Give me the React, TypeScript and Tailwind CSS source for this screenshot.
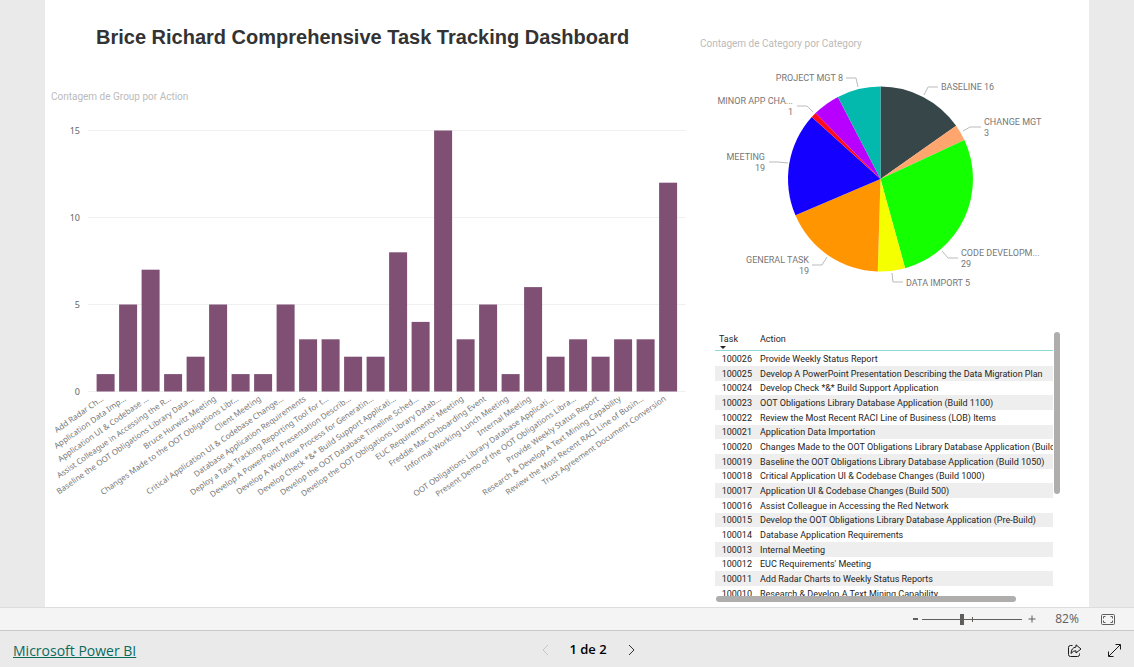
import { useState } from "react";

const UI_FONT = "font-['Segoe_UI','Open_Sans',sans-serif]";

const actions = [
  { label: "Add Radar Ch...", count: 1 },
  { label: "Application Data Imp...", count: 5 },
  { label: "Application UI & Codebase ...", count: 7 },
  { label: "Assist Colleague in Accessing the R...", count: 1 },
  { label: "Baseline the OOT Obligations Library Data...", count: 2 },
  { label: "Bruce Hurwitz Meeting", count: 5 },
  { label: "Changes Made to the OOT Obligations Libr...", count: 1 },
  { label: "Client Meeting", count: 1 },
  { label: "Critical Application UI & Codebase Change...", count: 5 },
  { label: "Database Application Requirements", count: 3 },
  { label: "Deploy a Task Tracking Reporting Tool for t...", count: 3 },
  { label: "Develop A PowerPoint Presentation Describ...", count: 2 },
  { label: "Develop A Workflow Process for Generatin...", count: 2 },
  { label: "Develop Check *&* Build Support Applicati...", count: 8 },
  { label: "Develop the OOT Database Timeline Sched...", count: 4 },
  { label: "Develop the OOT Obligations Library Datab...", count: 15 },
  { label: "EUC Requirements' Meeting", count: 3 },
  { label: "Freddie Mac Onboarding Event", count: 5 },
  { label: "Informal Working Lunch Meeting", count: 1 },
  { label: "Internal Meeting", count: 6 },
  { label: "OOT Obligations Library Database Applicati...", count: 2 },
  { label: "Present Demo of the OOT Obligations Libra...", count: 3 },
  { label: "Provide Weekly Status Report", count: 2 },
  { label: "Research & Develop A Text Mining Capability", count: 3 },
  { label: "Review the Most Recent RACI Line of Busin...", count: 3 },
  { label: "Trust Agreement Document Conversion", count: 12 },
];

const categories = [
  { name: "BASELINE", count: 16, color: "#374649" },
  { name: "CHANGE MGT", count: 3, color: "#fea66e" },
  { name: "CODE DEVELOPMENT", count: 29, color: "#14ff00" },
  { name: "DATA IMPORT", count: 5, color: "#f5ff00" },
  { name: "GENERAL TASK", count: 19, color: "#ff9500" },
  { name: "MEETING", count: 19, color: "#1400ff" },
  { name: "MINOR APP CHANGE", count: 1, color: "#ff0d1f" },
  { name: "OTHER", count: 5, color: "#b700ff" },
  { name: "PROJECT MGT", count: 8, color: "#03b8ac" },
];

const pieLabels = [
  { lines: ["BASELINE 16"], x: 251, y: 25, end: false, leader: "234,30 238,22 248,22" },
  { lines: ["CHANGE MGT", "3"], x: 294, y: 60, end: false, leader: "273,66 280,62 291,62" },
  { lines: ["CODE DEVELOPM...", "29"], x: 271, y: 191, end: false, leader: "252,186 258,193 268,193" },
  { lines: ["DATA IMPORT 5"], x: 216, y: 221, end: false, leader: "202,208 203,217 213,217" },
  { lines: ["GENERAL TASK", "19"], x: 119, y: 198, end: true, leader: "137,192 132,200 122,200" },
  { lines: ["MEETING", "19"], x: 75, y: 95, end: true, leader: "98,98 88,97 79,97" },
  { lines: ["MINOR APP CHA...", "1"], x: 103, y: 39, end: true, leader: "123,47 117,41 107,41" },
  { lines: ["PROJECT MGT 8"], x: 153, y: 16, end: true, leader: "168,22 166,13 156,13" },
];

const tasks = [
  { id: 100026, action: "Provide Weekly Status Report" },
  { id: 100025, action: "Develop A PowerPoint Presentation Describing the Data Migration Plan" },
  { id: 100024, action: "Develop Check *&* Build Support Application" },
  { id: 100023, action: "OOT Obligations Library Database Application (Build 1100)" },
  { id: 100022, action: "Review the Most Recent RACI Line of Business (LOB) Items" },
  { id: 100021, action: "Application Data Importation" },
  { id: 100020, action: "Changes Made to the OOT Obligations Library Database Application (Build 1075)" },
  { id: 100019, action: "Baseline the OOT Obligations Library Database Application (Build 1050)" },
  { id: 100018, action: "Critical Application UI & Codebase Changes (Build 1000)" },
  { id: 100017, action: "Application UI & Codebase Changes (Build 500)" },
  { id: 100016, action: "Assist Colleague in Accessing the Red Network" },
  { id: 100015, action: "Develop the OOT Obligations Library Database Application (Pre-Build)" },
  { id: 100014, action: "Database Application Requirements" },
  { id: 100013, action: "Internal Meeting" },
  { id: 100012, action: "EUC Requirements' Meeting" },
  { id: 100011, action: "Add Radar Charts to Weekly Status Reports" },
  { id: 100010, action: "Research & Develop A Text Mining Capability" },
];

function BarChart() {
  const baseY = 271.5;
  const unit = 17.4;
  return (
    <svg
      viewBox="0 0 645 390"
      className="block w-full font-['Segoe_UI','Noto_Sans',sans-serif]"
      role="img"
      aria-label="Contagem de Group por Action"
    >
      {[0, 5, 10, 15].map((tick) => (
        <g key={tick}>
          <line x1="43" x2="641" y1={baseY - tick * unit} y2={baseY - tick * unit} stroke="#f0f0f0" />
          <text x="35" y={baseY - tick * unit + 3} textAnchor="end" fontSize="9" fill="#666666">
            {tick}
          </text>
        </g>
      ))}
      {actions.map((item, i) => (
        <g key={item.label}>
          <rect
            x={51.6 + i * 22.5}
            y={baseY - item.count * unit}
            width="18"
            height={item.count * unit}
            fill="#7f5074"
          />
          <text
            transform={`translate(${59 + i * 22.5} 280) rotate(-35)`}
            textAnchor="end"
            fontSize="8"
            fill="#777777"
          >
            {item.label}
          </text>
        </g>
      ))}
    </svg>
  );
}

function PieChart() {
  const cx = 190.5;
  const cy = 114;
  const r = 92.5;
  const total = categories.reduce((sum, c) => sum + c.count, 0);
  let start = 0;
  const slices = categories.map((c) => {
    const end = start + (c.count / total) * Math.PI * 2;
    const d = `M${cx} ${cy}L${cx + r * Math.sin(start)} ${cy - r * Math.cos(start)}A${r} ${r} 0 0 1 ${
      cx + r * Math.sin(end)
    } ${cy - r * Math.cos(end)}Z`;
    start = end;
    return { ...c, d };
  });
  return (
    <svg
      viewBox="0 0 399 240"
      className="block w-full font-[Roboto,sans-serif]"
      role="img"
      aria-label="Contagem de Category por Category"
    >
      {slices.map((s) => (
        <path key={s.name} d={s.d} fill={s.color} />
      ))}
      {pieLabels.map((label) => (
        <g key={label.lines[0]}>
          <polyline points={label.leader} fill="none" stroke="#bbbbbb" />
          {label.lines.map((line, i) => (
            <text
              key={line}
              x={label.x}
              y={label.y + i * 11}
              textAnchor={label.end ? "end" : "start"}
              fontSize="9"
              fill="#777777"
            >
              {line}
            </text>
          ))}
        </g>
      ))}
    </svg>
  );
}

function TaskTable() {
  return (
    <div className="mr-[29px] ml-[25px]">
      <div className="flex">
        <div className="h-[264px] min-w-0 flex-1 overflow-hidden">
          <table className="w-full table-fixed border-separate border-spacing-0 font-[Roboto,sans-serif] text-[9px] leading-[14px] text-[#252423]">
            <thead>
              <tr className="text-left align-top">
                <th className="h-[19px] w-[37px] border-b border-[#8adbd5] p-0 pl-1 font-normal">
                  Task
                  <svg viewBox="0 0 6 3" className="ml-px block h-[3px] w-[6px]" aria-hidden="true">
                    <path d="M0 0h6L3 3z" fill="#252423" />
                  </svg>
                </th>
                <th className="h-[19px] border-b border-[#8adbd5] p-0 pl-2 font-normal">Action</th>
              </tr>
            </thead>
            <tbody>
              {tasks.map((task) => (
                <tr key={task.id} className="h-[15px] even:bg-[#eeeeee] [&:nth-child(3n)]:h-[14px]">
                  <td className="p-0 text-right">{task.id}</td>
                  <td className="p-0 pl-2 whitespace-nowrap">{task.action}</td>
                </tr>
              ))}
            </tbody>
          </table>
        </div>
        <div className="ml-px h-[162px] w-[6px] rounded-full bg-[#b0aead]" />
      </div>
      <div className="ml-px h-[6px] w-[300px] rounded-full bg-[#b0aead]" />
    </div>
  );
}

function ZoomBar() {
  const [zoom, setZoom] = useState(82);
  return (
    <div className="flex h-6 items-center justify-end border-y border-t-[#dddddd] border-b-[#c8c8c8] bg-[#f4f4f4] pr-[19px] text-[#605e5c]">
      <button
        type="button"
        aria-label="Zoom out"
        className="flex w-4 items-center justify-center pl-[2px]"
        onClick={() => setZoom(zoom - 10)}
      >
        <span className="h-[2px] w-[5px] bg-[#605e5c]" />
      </button>
      <div className="relative flex w-[100px] items-center">
        <span className="absolute left-[50px] h-[5px] w-px bg-[#605e5c]" />
        <input
          type="range"
          aria-label="Zoom"
          min={10}
          max={190}
          value={zoom}
          onChange={(e) => setZoom(Number(e.target.value))}
          className="relative h-px w-full appearance-none bg-[#605e5c] [&::-webkit-slider-thumb]:h-[11px] [&::-webkit-slider-thumb]:w-[4px] [&::-webkit-slider-thumb]:appearance-none [&::-webkit-slider-thumb]:bg-[#605e5c]"
        />
      </div>
      <button
        type="button"
        aria-label="Zoom in"
        className="ml-[2px] flex w-4 items-center justify-center"
        onClick={() => setZoom(zoom + 10)}
      >
        <svg viewBox="0 0 8 8" className="size-2" stroke="currentColor">
          <path d="M4 .5v7M.5 4h7" />
        </svg>
      </button>
      <span className="w-[50px] pl-1 text-center text-xs">{zoom}%</span>
      <button type="button" aria-label="Fit to page" className="ml-[11px]">
        <svg viewBox="0 0 14 11" className="block h-[11px] w-[14px]" fill="none" stroke="currentColor">
          <rect x=".5" y=".5" width="13" height="10" rx="1" />
          <path d="M4.500 2.500h-2v2M9.500 2.500h2v2M4.500 8.500h-2v-2M9.500 8.500h2v-2" />
        </svg>
      </button>
    </div>
  );
}

function Footer() {
  return (
    <footer className="grid h-9 grid-cols-3 items-center bg-[#eaeaea] px-[13px]">
      <a href="https://powerbi.microsoft.com" className="justify-self-start pt-1 text-sm text-[#0b6a5e] underline">
        Microsoft Power BI
      </a>
      <nav className="flex items-center justify-center gap-[17px] pt-[2px] pl-[42px]">
        <button type="button" aria-label="Previous page" disabled className="text-[#c8c6c4]">
          <svg viewBox="0 0 12 12" className="size-3" fill="none" stroke="currentColor">
            <path d="M8 1L3 6l5 5" />
          </svg>
        </button>
        <span className="text-[13px] font-semibold text-black">1 de 2</span>
        <button type="button" aria-label="Next page" className="text-[#323130]">
          <svg viewBox="0 0 12 12" className="size-3" fill="none" stroke="currentColor">
            <path d="M5 1l5 5-5 5" />
          </svg>
        </button>
      </nav>
      <div className="flex items-center justify-end gap-[26px] pt-[3px] text-[#1b1a19]">
        <button type="button" aria-label="Share">
          <svg viewBox="0 0 14 14" className="size-[14px]" fill="none" stroke="currentColor">
            <path d="M4.500 1.500H2.500Q.5 1.500.5 3.500v7Q.5 12.500 2.500 12.500h7Q11.500 12.500 11.500 10.500V9.500" />
            <path d="M8 .8L13 5 8 9V6.800Q5 6.600 3 9.500 3.300 3.700 8 3z" strokeLinejoin="round" />
          </svg>
        </button>
        <button type="button" aria-label="Full screen">
          <svg viewBox="0 0 13 13" className="size-[13px]" fill="none" stroke="currentColor">
            <path d="M1 12L12 1M7.500.5h5v5M.5 7.500v5h5" />
          </svg>
        </button>
      </div>
    </footer>
  );
}

export default function App() {
  return (
    <div className={`flex min-h-screen flex-col bg-[#eaeaea] ${UI_FONT}`}>
      <main className="mx-[45px] grid flex-1 grid-cols-[645fr_399fr] bg-white">
        {/* Title and bar chart */}
        <section className="min-w-0">
          <h1 className="pt-[25px] pl-[51px] font-['Liberation_Sans',Arial,sans-serif] text-xl leading-6 font-bold whitespace-nowrap text-[#333333]">
            Brice Richard Comprehensive Task Tracking Dashboard
          </h1>
          <h2 className="mt-[41px] mb-[16px] pl-[6px] font-[Roboto,sans-serif] text-[10px] leading-[14px] text-[#bbbbbb]">
            Contagem de Group por Action
          </h2>
          <BarChart />
        </section>

        {/* Pie chart and task list */}
        <section className="min-w-0">
          <h2 className="mt-[37px] mb-[14px] pl-[10px] font-[Roboto,sans-serif] text-[10px] leading-[14px] text-[#bbbbbb]">
            Contagem de Category por Category
          </h2>
          <PieChart />
          <div className="mt-[27px]">
            <TaskTable />
          </div>
        </section>
      </main>
      <ZoomBar />
      <Footer />
    </div>
  );
}
